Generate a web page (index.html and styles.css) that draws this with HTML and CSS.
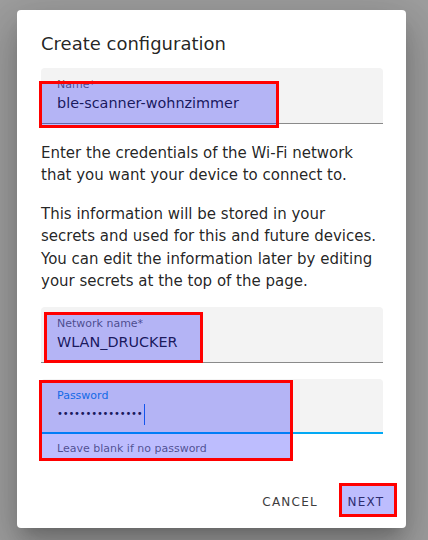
FILE: index.html
```html
<!DOCTYPE html>
<html>
<head>
<meta charset="utf-8">
<link rel="stylesheet" href="styles.css">
</head>
<body>
<div class="scrim">
  <div class="dialog">
    <h2 class="title">Create configuration</h2>
    <div class="field">
      <span class="label">Name*</span>
      <span class="value">ble-scanner-wohnzimmer</span>
    </div>
    <p class="text">Enter the credentials of the Wi-Fi network that you want your device to connect to.</p>
    <p class="text">This information will be stored in your secrets and used for this and future devices. You can edit the information later by editing your secrets at the top of the page.</p>
    <div class="field">
      <span class="label">Network name*</span>
      <span class="value">WLAN_DRUCKER</span>
    </div>
    <div class="field focused">
      <span class="label">Password</span>
      <span class="value dots"><span class="bullets">•••••••••••••••</span><span class="caret"></span></span>
    </div>
    <div class="helper">Leave blank if no password</div>
    <div class="actions">
      <button class="btn">Cancel</button>
      <button class="btn">Next</button>
    </div>
  </div>
</div>
<div class="mark mark-name"></div>
<div class="mark mark-network"></div>
<div class="mark mark-password"></div>
<div class="mark mark-next"></div>
</body>
</html>
```

FILE: styles.css
```css
html, body {
  margin: 0;
  padding: 0;
  width: 428px;
  height: 540px;
  overflow: hidden;
}
body {
  background: #9e9e9e;
  font-family: "DejaVu Sans", "Noto Sans", sans-serif;
  position: relative;
}
.scrim {
  padding: 10px 22px 0 17px;
}
.dialog {
  width: 389px;
  height: 518px;
  box-sizing: border-box;
  background: #fff;
  border-radius: 4px;
  box-shadow: 0 11px 15px -7px rgba(0,0,0,.2), 0 24px 38px 3px rgba(0,0,0,.14), 0 9px 46px 8px rgba(0,0,0,.12);
  padding: 22px 23px 0 24px;
  display: flex;
  flex-direction: column;
}
.title {
  margin: 0;
  font-size: 18px;
  line-height: 24px;
  font-weight: 400;
  color: rgba(0,0,0,0.87);
}
.field {
  margin-top: 12px;
  background: #f3f3f3;
  border-radius: 4px 4px 0 0;
  border-bottom: 1px solid #8a8a8a;
  height: 55px;
  box-sizing: content-box;
  padding: 0 16px;
  display: flex;
  flex-direction: column;
}
.label {
  margin-top: 9px;
  font-size: 11px;
  line-height: 16px;
  color: rgba(0,0,0,0.6);
}
.value {
  font-size: 14.4px;
  line-height: 20px;
  color: rgba(0,0,0,0.87);
}
.text {
  margin: 18px 0 0;
  font-size: 15px;
  line-height: 22.4px;
  color: rgba(0,0,0,0.87);
}
.text + .text { margin-top: 16px; }
.text + .field { margin-top: 15px; }
.field + .field { margin-top: 16px; }
.focused {
  border-bottom: 2px solid #03a9f4;
  height: 53px;
}
.focused .label {
  color: #1a8fe0;
  margin-top: 9px;
}
.dots {
  display: flex;
  align-items: center;
  height: 22px;
  margin-top: -1px;
}
.bullets {
  font-size: 10px;
  letter-spacing: -0.2px;
  line-height: 22px;
}
.caret {
  display: inline-block;
  width: 1px;
  height: 21px;
  background: #1a73e8;
  margin-left: 2px;
}
.helper {
  padding: 7px 16px 0;
  font-size: 11px;
  line-height: 16px;
  color: rgba(0,0,0,0.6);
}
.actions {
  margin-top: auto;
  margin-right: -15px;
  padding-bottom: 8px;
  display: flex;
  justify-content: flex-end;
  gap: 8px;
}
.btn {
  height: 36px;
  min-width: 64px;
  padding: 0 8px;
  border: 0;
  background: transparent;
  font-family: "DejaVu Sans", "Noto Sans", sans-serif;
  font-size: 12px;
  font-weight: 400;
  letter-spacing: 1.25px;
  text-transform: uppercase;
  color: #3d3d3d;
}
.mark {
  position: absolute;
  box-sizing: border-box;
  border: 3px solid #ff0000;
  background: rgba(0,0,250,0.26);
}
.mark-name { left: 39px; top: 81px; width: 240px; height: 47px; }
.mark-network { left: 44px; top: 312px; width: 159px; height: 51px; }
.mark-password { left: 39px; top: 380px; width: 254px; height: 81px; }
.mark-next { left: 339px; top: 483px; width: 58px; height: 34px; }
```
